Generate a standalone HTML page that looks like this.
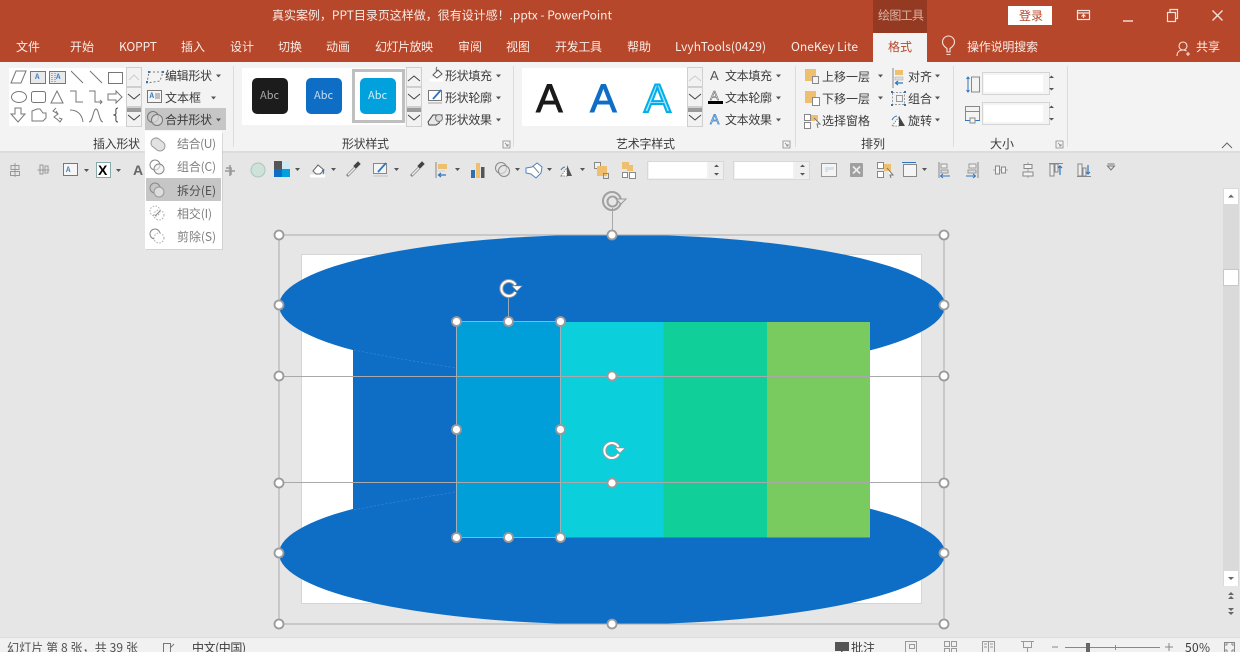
<!DOCTYPE html>
<html lang="zh"><head><meta charset="utf-8"><title>PowerPoint</title>
<style>
html,body{margin:0;padding:0;background:#e6e6e6;width:1240px;height:652px;overflow:hidden}
svg{display:block;font-family:"Liberation Sans","Noto Sans CJK SC",sans-serif;filter:blur(.35px)}
text{font-family:"Noto Sans CJK SC","Liberation Sans",sans-serif;font-size:12px;fill:#3c3c3c}
.t text{fill:#f8ece7;font-size:12px}
.m text{fill:#808080;font-size:12px}
.i{fill:none;stroke:#777;stroke-width:1}
.dd{fill:#555;stroke:none}
.h{fill:#fff;stroke:#9a9a9a;stroke-width:1.800}
.sb{fill:none;stroke:#444;stroke-width:1}
</style></head><body>
<svg width="1240" height="652" viewBox="0 0 1240 652" xmlns="http://www.w3.org/2000/svg">
<!-- backgrounds -->
<rect width="1240" height="652" fill="#e6e6e6"/>
<rect width="1240" height="62" fill="#b7472a"/>
<rect y="62" width="1240" height="90" fill="#f3f3f3"/>
<rect y="151" width="1240" height="2" fill="#dcdcdc"/>
<rect x="873" width="54" height="33" fill="#953a22"/>
<rect x="873" y="33" width="54" height="29" fill="#f3f3f3"/>

<!-- title bar -->
<g class="t">
<text x="272" y="19.500" textLength="340">真实案例，PPT目录页这样做，很有设计感！.pptx  -  PowerPoint</text>
<text x="878" y="19.500" textLength="46" style="fill:#d9b3a6">绘图工具</text>
</g>
<rect x="1008" y="6" width="44" height="19" fill="#fff"/>
<text x="1019" y="20" style="fill:#b7472a" textLength="24">登录</text>
<g fill="none" stroke="#f4e4de" stroke-width="1.200">
<rect x="1077.500" y="10.500" width="12" height="9"/><path d="M1077 13h13M1083.500 18v-3M1081.500 16.500l2-2 2 2"/>
<path d="M1123 21h10" stroke-width="1.400"/>
<rect x="1167.500" y="12.500" width="8" height="9"/><path d="M1170 12v-2.500h7.500v9h-2"/>
<path d="M1212.500 10.500l10 10M1222.500 10.500l-10 10" stroke-width="1.300"/>
</g>

<!-- tabs -->
<g class="t">
<text x="16" y="51" textLength="24">文件</text>
<text x="70" y="51" textLength="24">开始</text>
<text x="119" y="51" textLength="38">KOPPT</text>
<text x="181" y="51" textLength="24">插入</text>
<text x="230" y="51" textLength="24">设计</text>
<text x="278" y="51" textLength="24">切换</text>
<text x="326" y="51" textLength="24">动画</text>
<text x="375" y="51" textLength="58">幻灯片放映</text>
<text x="458" y="51" textLength="24">审阅</text>
<text x="506" y="51" textLength="24">视图</text>
<text x="555" y="51" textLength="47">开发工具</text>
<text x="627" y="51" textLength="24">帮助</text>
<text x="675" y="51" textLength="91">LvyhTools(0429)</text>
<text x="791" y="51" textLength="67">OneKey Lite</text>
<text x="967" y="51" textLength="71">操作说明搜索</text>
<text x="1196" y="51" textLength="24">共享</text>
</g>
<text x="888" y="51" style="fill:#b7472a" textLength="24">格式</text>
<g fill="none" stroke="#f4e4de" stroke-width="1.100">
<path d="M947 52v-3.500c-3-2-4.500-4-4.500-6.500a6 6 0 0 1 12 0c0 2.500-1.500 4.500-4.500 6.500V52zM946.500 54.500h4"/>
<circle cx="1183" cy="46" r="4"/><path d="M1177 56c0-4 2.500-6 6-6 1.500 0 2.500.3 3.500 1M1186 54h4M1188 52v4"/>
</g>

<!-- insert shapes gallery -->
<rect x="9" y="68" width="117" height="58" fill="#fff"/>
<g fill="#f2f2f2" stroke="#cfcfcf"><rect x="126.500" y="67.500" width="15" height="19"/><rect x="126.500" y="87.500" width="15" height="19"/><rect x="126.500" y="107.500" width="15" height="19"/></g>
<path d="M129 80l5-5 5 5" fill="none" stroke="#ccc"/>
<path class="sb" d="M128 94l6 5 6-5M128 115l6 5 6-5M127 109h14M127 111h14"/>
<g class="i">
<path d="M11 83l5-12h10l-5 12z"/>
<rect x="30.500" y="71.500" width="15" height="12" fill="#e9e9e9"/><rect x="49.500" y="71.500" width="16" height="12" fill="#e9e9e9"/><path d="M52 73v9M55 73v9" stroke-dasharray="1 1"/>
<path d="M71 71l12 12M90 71l12 12"/><rect x="108.500" y="72.500" width="14" height="11"/>
<ellipse cx="19" cy="97" rx="7.500" ry="5.500"/><rect x="31.500" y="91.500" width="14" height="11" rx="2"/><path d="M57 91l6 12H51z"/>
<path d="M70 91h6v11h7M89 91h6v11h7M100 100l2 2-2 2"/><path d="M108 94h8v-3l6 6-6 6v-3h-8z"/>
<path d="M15 108h6v6h4l-7 8-7-8h4z"/><path d="M32 111l5-2h3l3 4h3v5l-3 3H32z"/>
<path d="M56 108l-3 3 5 3-4 3 4 3 2 2 2-3-3-1M58 114l-2-3"/><path d="M70 110c7 0 12 4 13 12"/><path d="M89 122c4 0 4-13 7-13s3 13 7 13"/>
<path d="M118 108c-3 0-2 3-2 5s-1 1.500-2 2c1 .5 2 0 2 2s-1 5 2 5" stroke="#444"/>
</g>
<text x="35" y="79" style="font-size:7px;fill:#3f7fc4;font-weight:700">A</text><text x="56" y="79" style="font-size:7px;fill:#3f7fc4;font-weight:700">A</text>

<!-- edit shape column -->
<path d="M149 72h14l-3 9-13 2z" fill="none" stroke="#777" stroke-dasharray="2 2"/><g fill="#2f75bd"><rect x="148" y="71" width="2" height="2"/><rect x="162" y="71" width="2" height="2"/><rect x="146" y="81" width="2" height="2"/></g>
<text x="165" y="80" textLength="47">编辑形状</text><path class="dd" d="M216 74.500h5l-2.500 3z"/>
<rect x="147.500" y="90.500" width="14" height="12" fill="#f5f5f5" stroke="#777"/><path d="M155 94h5M155 96h5M155 98h5" stroke="#888"/><text x="149.500" y="98" style="font-size:7px;fill:#2f75bd;font-weight:700">A</text>
<text x="165" y="102" textLength="36">文本框</text><path class="dd" d="M211 96.500h5l-2.500 3z"/>
<rect x="145" y="108" width="81" height="22" fill="#c6c6c6"/>
<circle cx="153" cy="117" r="5.500" fill="none" stroke="#777"/><circle cx="157" cy="120" r="5.500" fill="#ddd" fill-opacity=".7" stroke="#777"/>
<text x="165" y="124" textLength="47">合并形状</text><path class="dd" d="M216 118.500h5l-2.500 3z"/>

<!-- shape style gallery -->
<rect x="242" y="68" width="163" height="57" fill="#fff"/>
<rect x="353.500" y="70.500" width="50" height="51" fill="#fff" stroke="#bfbfbf" stroke-width="3"/>
<rect x="252" y="78" width="36" height="36" rx="5" fill="#1c1c1c"/><rect x="306" y="78" width="36" height="36" rx="5" fill="#0e6ec5"/><rect x="360" y="78" width="36" height="36" rx="5" fill="#00a1dc"/>
<text x="260" y="99" style="font-size:11px;fill:#a8a8a8">Abc</text><text x="314" y="99" style="font-size:11px;fill:#c7dcf2">Abc</text><text x="368" y="99" style="font-size:11px;fill:#d2f0fa">Abc</text>
<g fill="#f2f2f2" stroke="#cfcfcf"><rect x="406.500" y="67.500" width="15" height="19"/><rect x="406.500" y="87.500" width="15" height="19"/><rect x="406.500" y="107.500" width="15" height="19"/></g>
<path class="sb" d="M408 81l6-5 6 5M408 94l6 5 6-5M408 115l6 5 6-5M407 109h14M407 111h14"/>
<path d="M430 80h13" stroke="#fff" stroke-width="3"/><path d="M433 75l5-5 4 4-5 4z" fill="#fff" stroke="#555"/><path d="M437 67c-1 1-1 3 0 5" fill="none" stroke="#666"/>
<text x="445" y="80" textLength="47">形状填充</text><path class="dd" d="M496 74.500h5l-2.500 3z"/>
<rect x="428.500" y="90.500" width="13" height="10" fill="#fff" stroke="#777"/><path d="M433 99l8-9" stroke="#2f75bd" stroke-width="1.800"/><path d="M428 103h14" stroke="#ccc" stroke-width="2"/>
<text x="445" y="102" textLength="47">形状轮廓</text><path class="dd" d="M496 96.500h5l-2.500 3z"/>
<path d="M428 122l5-7h9l-3 8-3 2h-7z" fill="#e7e7e7" stroke="#444"/><circle cx="439" cy="118" r="3.500" fill="#ddd" stroke="#777"/>
<text x="445" y="124" textLength="47">形状效果</text><path class="dd" d="M496 118.500h5l-2.500 3z"/>

<!-- WordArt -->
<rect x="522" y="68" width="165" height="58" fill="#fff"/>
<text x="536" y="112" style="font-size:40px;fill:#1a1a1a;stroke:#1a1a1a;stroke-width:.9px;font-family:'Liberation Sans',sans-serif">A</text>
<text x="590" y="112" style="font-size:40px;fill:#0e6ec5;stroke:#0e6ec5;stroke-width:.9px;font-family:'Liberation Sans',sans-serif">A</text>
<text x="644" y="112" style="font-size:40px;fill:#a7e4fa;stroke:#00aeea;stroke-width:2px;font-family:'Liberation Sans',sans-serif">A</text>
<g fill="#f2f2f2" stroke="#cfcfcf"><rect x="687.500" y="67.500" width="15" height="19"/><rect x="687.500" y="87.500" width="15" height="19"/><rect x="687.500" y="107.500" width="15" height="19"/></g>
<path d="M689 81l6-5 6 5" fill="none" stroke="#ccc"/><path class="sb" d="M689 94l6 5 6-5M689 115l6 5 6-5M688 109h14M688 111h14"/>
<text x="710" y="80" style="font-size:13px;fill:#555;font-family:'Liberation Sans',sans-serif">A</text>
<text x="725" y="80" textLength="47">文本填充</text><path class="dd" d="M776 74.500h5l-2.500 3z"/>
<text x="710" y="100" style="font-size:13px;fill:#fff;stroke:#666;stroke-width:.6px;font-family:'Liberation Sans',sans-serif">A</text><rect x="708" y="101" width="15" height="3" fill="#000"/>
<text x="725" y="102" textLength="47">文本轮廓</text><path class="dd" d="M776 96.500h5l-2.500 3z"/>
<text x="710" y="124" style="font-size:14px;fill:#dbe9f7;stroke:#3d83c8;stroke-width:.7px;font-family:'Liberation Sans',sans-serif">A</text>
<text x="725" y="124" textLength="47">文本效果</text><path class="dd" d="M776 118.500h5l-2.500 3z"/>

<!-- arrange -->
<rect x="805" y="69" width="11" height="12" fill="#eebf6f"/><rect x="812.500" y="76.500" width="6" height="7" fill="#f3f3f3" stroke="#888"/>
<text x="822" y="81" textLength="48">上移一层</text><path class="dd" d="M878 74.500h5l-2.500 3z"/>
<rect x="805" y="91" width="11" height="12" fill="#eebf6f"/><rect x="812.500" y="97.500" width="7" height="8" fill="#fff" stroke="#888"/>
<text x="822" y="103" textLength="48">下移一层</text><path class="dd" d="M878 96.500h5l-2.500 3z"/>
<rect x="804.500" y="114.500" width="6" height="6" fill="#fff" stroke="#888"/><rect x="804.500" y="122.500" width="6" height="6" fill="#fff" stroke="#888"/><rect x="811" y="115" width="7" height="6" fill="#eebf6f"/><path d="M814 118l6 6-3 0 1 4" fill="#fff" stroke="#777"/>
<text x="822" y="125" textLength="48">选择窗格</text>
<path d="M893 68v20" stroke="#888"/><rect x="895" y="70" width="8" height="5" fill="#eebf6f"/><rect x="895" y="77" width="8" height="3" fill="#ddd" stroke="#aaa" stroke-width=".5"/><path d="M903 83h-7M898 81l-2.500 2 2.500 2" fill="none" stroke="#2f75bd" stroke-width="1.200"/>
<text x="908" y="81" textLength="24">对齐</text><path class="dd" d="M935 74.500h5l-2.500 3z"/>
<rect x="892.500" y="92.500" width="12" height="12" fill="none" stroke="#999" stroke-dasharray="2 1.500"/><rect x="896.500" y="95.500" width="6" height="6" fill="none" stroke="#999"/><g fill="#2f75bd"><rect x="891" y="91" width="2" height="2"/><rect x="904" y="91" width="2" height="2"/><rect x="891" y="104" width="2" height="2"/><rect x="904" y="104" width="2" height="2"/></g>
<text x="908" y="103" textLength="24">组合</text><path class="dd" d="M935 96.500h5l-2.500 3z"/>
<path d="M892 126l7-9v9z" fill="#fff" stroke="#888" stroke-dasharray="1.500 1"/><path d="M899 116l6 10h-6z" fill="#444"/><path d="M892 120c1-2 3-4 5-4" fill="none" stroke="#2f75bd"/>
<text x="908" y="125" textLength="24">旋转</text><path class="dd" d="M935 118.500h5l-2.500 3z"/>

<!-- size -->
<rect x="982.500" y="72.500" width="67" height="22" fill="#f4f4f4" stroke="#d4d4d4"/><rect x="982.500" y="102.500" width="67" height="22" fill="#f4f4f4" stroke="#d4d4d4"/>
<rect x="971.500" y="77" width="8" height="15" fill="none" stroke="#888"/>
<rect x="984" y="75" width="59" height="17" fill="#fff"/><rect x="984" y="105" width="59" height="17" fill="#fff"/>
<g fill="none" stroke="#2f75bd"><path d="M968 77v15"/><path d="M966.500 79l1.500-2 1.500 2M966.500 90l1.500 2 1.500-2"/></g>
<g fill="none" stroke="#888"><rect x="965.500" y="106.500" width="14" height="14"/><path d="M965 111.500h15"/></g><path d="M965 120.500h15" stroke="#2f75bd"/><rect x="970" y="118" width="5" height="5" fill="#f3f3f3" stroke="#888"/>
<path class="dd" d="M1049 78l2.500-2.500 2.500 2.500zM1049 88l2.500 2.500 2.500-2.500zM1049 108l2.500-2.500 2.500 2.500zM1049 118l2.500 2.500 2.500-2.500z"/>

<!-- ribbon separators and group labels -->
<g stroke="#dcdcdc"><path d="M233.500 66v81M513.500 66v81M795.500 66v81M953.500 66v81M1067.500 66v81"/></g>
<text x="93" y="148" textLength="47">插入形状</text>
<text x="342" y="148" textLength="47">形状样式</text>
<text x="616" y="148" textLength="59">艺术字样式</text>
<text x="861" y="148" textLength="24">排列</text>
<text x="990" y="148" textLength="24">大小</text>
<g fill="none" stroke="#888" stroke-width=".8"><path d="M503 141h7v7h-7zM505 143l3 3M508 144v2h-2"/><path d="M783 141h7v7h-7zM785 143l3 3M788 144v2h-2"/><path d="M1056 141h7v7h-7zM1058 143l3 3M1061 144v2h-2"/></g>
<path d="M1222 148l5-5 5 5" fill="none" stroke="#666"/>

<!-- toolbar icons -->
<path d="M15 163v14M11 165.500h8v4h-8zM10.500 171.500h9v4h-9z" fill="none" stroke="#999"/>
<path d="M37.500 170h12M40 165h3v9h-3zM45 166h3v7h-3z" fill="none" stroke="#999"/>
<rect x="63.500" y="163.500" width="14" height="12" fill="#f6f6f6" stroke="#777"/>
<text x="66" y="172" style="font-size:7px;fill:#3f7fc4;font-weight:700">A</text>
<path class="dd" d="M84 169h5l-2.500 3z"/>
<rect x="96.500" y="162.500" width="14" height="15" fill="#fff" stroke="#8aa"/><text x="98" y="175" style="font-size:14px;fill:#000;font-weight:700;font-family:'Liberation Sans',sans-serif">X</text>
<path class="dd" d="M116 169h5l-2.500 3z"/>
<text x="133" y="175" style="font-size:14px;fill:#666;font-weight:700;font-family:'Liberation Sans',sans-serif">A</text>
<path d="M225 171h10M230 165v11" fill="none" stroke="#999" stroke-width="1.500"/><path d="M226 168h5v7" fill="none" stroke="#999" stroke-width="1.500"/>
<circle cx="258" cy="170" r="7" fill="#cfe2da" stroke="#aac4b8"/>
<rect x="274" y="161" width="8" height="8" fill="#555"/><rect x="282" y="161" width="8" height="8" fill="#cfe8f5"/><rect x="274" y="169" width="8" height="8" fill="#0e6ec5"/><rect x="282" y="169" width="8" height="8" fill="#00a1dc"/>
<path class="dd" d="M295 168h5l-2.500 3z"/>
<path d="M313 171l5-6 6 5-4 4h-4z" fill="#fff" stroke="#666"/><path d="M322 170c2 1 2 3 1 4" fill="none" stroke="#2f75bd"/><path d="M310 176h15" stroke="#fff" stroke-width="3"/><path class="dd" d="M331 168h5l-2.500 3z"/>
<path d="M347 176l8-8" stroke="#888" stroke-width="3"/><path d="M348 175l7-7" stroke="#eee" stroke-width="1.400"/><path d="M354 166l2 2 4-4-2-2z" fill="#444" stroke="#444"/>
<rect x="373.500" y="163.500" width="13" height="10" fill="#f4f4f4" stroke="#888"/><path d="M378 172l8-9" stroke="#2f75bd" stroke-width="1.800"/><path d="M373 176h15" stroke="#d5d5d5" stroke-width="2"/><path class="dd" d="M394 168h5l-2.500 3z"/>
<path d="M411 176l8-8" stroke="#888" stroke-width="3"/><path d="M412 175l7-7" stroke="#eee" stroke-width="1.400"/><path d="M418 166l2 2 4-4-2-2z" fill="#444" stroke="#444"/>
<path d="M436 162v16" stroke="#888"/><rect x="438" y="164" width="9" height="5" fill="#eebf6f"/><rect x="438" y="170" width="7" height="2" fill="#ddd"/><path d="M446 175h-7M441 173l-2.500 2 2.500 2" fill="none" stroke="#2f75bd" stroke-width="1.200"/><path class="dd" d="M455 168h5l-2.500 3z"/>
<rect x="471" y="170" width="4" height="8" fill="#2f6fae"/><rect x="476" y="163" width="4" height="15" fill="#eebf6f"/><rect x="481" y="167" width="3.500" height="11" fill="#555"/>
<circle cx="501" cy="168" r="5.500" fill="none" stroke="#888"/><circle cx="504" cy="171" r="5.500" fill="#e6e6e6" fill-opacity=".6" stroke="#888"/><path class="dd" d="M515 168h5l-2.500 3z"/>
<path d="M526 168l6 -1 5-4 5 4-1 6-5 5-5-4-5-1z" fill="#fff" stroke="#4a86c5"/><path d="M533 166l6 7" stroke="#888"/><path class="dd" d="M547 168h5l-2.500 3z"/>
<path d="M561 176l6-8v8z" fill="#fff" stroke="#888" stroke-dasharray="1.500 1"/><path d="M567 165l5 11h-5z" fill="#555"/><path d="M561 170c1-2 3-3 4-3" fill="none" stroke="#2f75bd"/><path class="dd" d="M580 168h5l-2.500 3z"/>
<rect x="594.500" y="162.500" width="6" height="6" fill="#f3f3f3" stroke="#888"/><rect x="597" y="166" width="10" height="10" fill="#eebf6f"/><rect x="603.500" y="173.500" width="5" height="5" fill="none" stroke="#888"/>
<rect x="622" y="162" width="7" height="7" fill="#eebf6f"/><rect x="627" y="165" width="6" height="6" fill="#eebf6f"/><rect x="622.500" y="172.500" width="5" height="5" fill="#fff" stroke="#888"/><rect x="629.500" y="172.500" width="6" height="6" fill="#fff" stroke="#888"/>

<!-- inputs -->
<rect x="648" y="161" width="76" height="18" fill="#f2f2f2" stroke="#d8d8d8" transform="translate(-.5 .5)"/>
<rect x="649" y="162" width="58" height="16" fill="#fff"/><rect x="709" y="162" width="14" height="16" fill="#efefef"/>
<rect x="734" y="161" width="76" height="18" fill="#f2f2f2" stroke="#d8d8d8" transform="translate(-.5 .5)"/>
<rect x="735" y="162" width="58" height="16" fill="#fff"/><rect x="795" y="162" width="14" height="16" fill="#efefef"/>
<path class="dd" d="M714 167l2.500-2.500 2.500 2.500zM714 173l2.500 2.500 2.500-2.500zM800 167l2.500-2.500 2.500 2.500zM800 173l2.500 2.500 2.500-2.500z"/>

<rect x="821.500" y="163.500" width="15" height="13" fill="#f4f4f4" stroke="#999"/><path d="M825 167h9v3h-6v2h-3z" fill="#cfe3f4"/>
<rect x="850" y="163" width="13" height="14" rx="1" fill="#a0a0a0"/><path d="M853 166.500l7 7M860 166.500l-7 7" stroke="#eee" stroke-width="1.600"/>
<rect x="877.500" y="162.500" width="6" height="6" fill="#fff" stroke="#888"/><rect x="877.500" y="171.500" width="6" height="6" fill="#fff" stroke="#888"/><rect x="884" y="164" width="7" height="7" fill="#eebf6f"/><path d="M887 168l6 7-3 0 1 3" fill="#fff" stroke="#777"/>
<path d="M902 162.500h14" stroke="#2f75bd"/><rect x="903.500" y="164.500" width="13" height="12" fill="#f5f5f5" stroke="#888"/><path class="dd" d="M922 168h5l-2.500 3z"/>
<path d="M939 162v16" stroke="#888"/><rect x="941" y="164" width="6" height="4" fill="#eee" stroke="#999"/><rect x="941" y="170" width="7" height="3" fill="#ddd" stroke="#999"/><path d="M950 176h-9M943 174l-2.500 2 2.500 2" fill="none" stroke="#2f75bd"/>
<path d="M978 162v16" stroke="#888"/><rect x="969" y="164" width="7" height="4" fill="#eee" stroke="#999"/><rect x="968" y="170" width="8" height="3" fill="#ddd" stroke="#999"/><path d="M966 176h9M973 174l2.500 2-2.500 2" fill="none" stroke="#2f75bd"/>
<path d="M993 170h15" stroke="#aaa"/><rect x="995.500" y="166" width="4" height="8" fill="#f2f2f2" stroke="#888"/><rect x="1001.500" y="167" width="4" height="6" fill="#f2f2f2" stroke="#888"/>
<path d="M1028 162v16" stroke="#aaa"/><rect x="1024" y="164.500" width="8" height="4" fill="#f2f2f2" stroke="#888"/><rect x="1023" y="172" width="10" height="4" fill="#f2f2f2" stroke="#888"/>
<path d="M1049 163.500h14" stroke="#888"/><rect x="1050" y="164" width="4" height="12" fill="#eee" stroke="#888"/><rect x="1055" y="164" width="3" height="8" fill="#eee" stroke="#888"/><path d="M1060 175v-9M1058 168l2-2 2 2" fill="none" stroke="#2f75bd" stroke-width="1.200"/>
<path d="M1077 176.500h14" stroke="#888"/><rect x="1078" y="164" width="4" height="12" fill="#eee" stroke="#888"/><rect x="1083" y="168" width="3" height="8" fill="#eee" stroke="#888"/><path d="M1088 165v9M1086 172l2 2 2-2" fill="none" stroke="#2f75bd" stroke-width="1.200"/>
<path d="M1107.500 166h7l-3.500 4z M1107.500 164h7" fill="none" stroke="#777"/>

<!-- slide -->
<rect x="301.500" y="254.500" width="620" height="349" fill="#fff" stroke="#d5d5d5"/>
<rect x="353" y="340" width="200" height="180" fill="#0e6ec5"/>
<ellipse cx="612" cy="305.500" rx="333" ry="71" fill="#0e6ec5"/>
<ellipse cx="612" cy="553.500" rx="333" ry="71" fill="#0e6ec5"/>
<path d="M354 350c40 8 70 13 102 18" fill="none" stroke="#3d88d2" stroke-dasharray="2 2" stroke-width=".7"/>
<path d="M354 510c40-8 70-13 102-18" fill="none" stroke="#3d88d2" stroke-dasharray="2 2" stroke-width=".7"/>
<rect x="456" y="322" width="104.500" height="215.500" fill="#009fd9"/>
<rect x="560.500" y="322" width="103" height="215.500" fill="#0bd0dc"/>
<rect x="663.500" y="322" width="103.500" height="215.500" fill="#10cf98"/>
<rect x="767" y="322" width="103" height="215.500" fill="#79cb5f"/>

<!-- selection -->
<g fill="none" stroke="#a9a9a9" stroke-width="1">
<rect x="279" y="235" width="665" height="389"/>
<path d="M279 376.500h665M279 482.500h665M612.500 208v27"/>
<path d="M508.500 298v23" stroke="#9ab"/>
</g>
<rect x="456.500" y="321.500" width="104" height="216" fill="none" stroke="#9fb0b8" stroke-width="1"/>
<g class="h">
<circle cx="279" cy="235" r="4.500"/><circle cx="612" cy="235" r="4.500"/><circle cx="944" cy="235" r="4.500"/>
<circle cx="279" cy="305" r="4.500"/><circle cx="944" cy="305" r="4.500"/>
<circle cx="279" cy="376" r="4.500"/><circle cx="612" cy="376" r="4.500"/><circle cx="944" cy="376" r="4.500"/>
<circle cx="279" cy="483" r="4.500"/><circle cx="612" cy="483" r="4.500"/><circle cx="944" cy="483" r="4.500"/>
<circle cx="279" cy="553" r="4.500"/><circle cx="944" cy="553" r="4.500"/>
<circle cx="279" cy="624" r="4.500"/><circle cx="612" cy="624" r="4.500"/><circle cx="944" cy="624" r="4.500"/>
<circle cx="456.500" cy="321.500" r="4.500"/><circle cx="508.500" cy="321.500" r="4.500"/><circle cx="560.500" cy="321.500" r="4.500"/>
<circle cx="456.500" cy="429.500" r="4.500"/><circle cx="560.500" cy="429.500" r="4.500"/>
<circle cx="456.500" cy="537.500" r="4.500"/><circle cx="508.500" cy="537.500" r="4.500"/><circle cx="560.500" cy="537.500" r="4.500"/>
</g>
<!-- rotate handles -->
<g fill="none">
<circle cx="612" cy="201" r="9" stroke="#a0a0a0" stroke-width="2"/><circle cx="612.500" cy="201.500" r="5" stroke="#a0a0a0" stroke-width="2"/>
<g stroke="#9a9a9a" stroke-width="4"><path d="M515.500 292a7.500 7.500 0 1 1 0-7"/><path d="M618.500 454a7.500 7.500 0 1 1 0-7"/></g>
<g stroke="#fff" stroke-width="2"><path d="M515.500 292a7.500 7.500 0 1 1 0-7"/><path d="M618.500 454a7.500 7.500 0 1 1 0-7"/></g>
</g>
<path d="M616 199h10l-5 5z" fill="#e6e6e6" stroke="#9a9a9a"/><path d="M512 286h10l-5 5z" fill="#fff" stroke="#9a9a9a" stroke-width=".6"/><path d="M615 448h10l-5 5z" fill="#fff" stroke="#9a9a9a" stroke-width=".6"/>

<!-- merge menu -->
<rect x="146" y="133" width="77" height="117" fill="#bbb" opacity=".45"/>
<rect x="145" y="131" width="77" height="118" fill="#fff"/>
<rect x="146" y="178" width="75" height="23" fill="#c6c6c6"/>
<g class="m">
<text x="177" y="148" textLength="39">结合(U)</text>
<text x="177" y="171" textLength="39">组合(C)</text>
<text x="177" y="195" textLength="39" style="fill:#505050">拆分(E)</text>
<text x="177" y="218" textLength="35">相交(I)</text>
<text x="177" y="241" textLength="39">剪除(S)</text>
</g>
<path d="M151 143a5 5 0 0 1 8-4l5 4a5 5 0 0 1-7 7l-5-4a5 5 0 0 1-1-3z" fill="#e2e2e2" stroke="#999"/>
<circle cx="155" cy="165" r="5" fill="none" stroke="#888"/><circle cx="159" cy="169" r="5" fill="#eee" fill-opacity=".6" stroke="#888"/>
<circle cx="155" cy="188" r="5" fill="none" stroke="#888"/><circle cx="159" cy="192" r="5" fill="#ddd" stroke="#999"/>
<circle cx="155" cy="211" r="5" fill="none" stroke="#aaa" stroke-dasharray="1.500 1.500"/><circle cx="159" cy="215" r="5" fill="none" stroke="#aaa" stroke-dasharray="1.500 1.500"/><path d="M155 216l5-5" stroke="#888"/>
<circle cx="155" cy="234" r="5" fill="#fff" stroke="#888"/><circle cx="159" cy="238" r="5" fill="#fff" stroke="#aaa" stroke-dasharray="1.500 1.500"/>

<!-- scrollbar -->
<rect x="1223" y="188" width="16" height="398" fill="#dadada"/>
<rect x="1224" y="189" width="14" height="15" fill="#fff"/>
<rect x="1223.500" y="269.500" width="15" height="16" fill="#fff" stroke="#c8c8c8"/>
<rect x="1224" y="571" width="14" height="15" fill="#fff"/>
<path fill="#666" d="M1228 197.500l3-3 3 3zM1228 577l3 3 3-3zM1228 595l3-3 3 3zM1228 599l3-3 3 3zM1228 608l3 3 3-3zM1228 612l3 3 3-3z"/>

<!-- status bar -->
<rect y="638" width="1240" height="14" fill="#f1f1f1"/>
<rect y="637" width="1240" height="1" fill="#dcdcdc"/>
<text x="7" y="652" style="fill:#505050" textLength="131">幻灯片 第 8 张，共 39 张</text>
<path d="M163.500 643.500h7v9h-7zM170 648l4-4" fill="none" stroke="#777"/>
<text x="192" y="652" textLength="54">中文(中国)</text>
<path d="M835 642h14v9h-6l-2 2v-2h-6z" fill="#555"/>
<text x="851" y="652" textLength="24">批注</text>
<g fill="none" stroke="#999"><rect x="905.500" y="641.500" width="11" height="11"/><rect x="909.500" y="644.500" width="5" height="4"/><rect x="944.500" y="641.500" width="5" height="5"/><rect x="951.500" y="641.500" width="5" height="5"/><rect x="944.500" y="648.500" width="5" height="5"/><rect x="951.500" y="648.500" width="5" height="5"/><rect x="982.500" y="641.500" width="12" height="12"/><path d="M988.500 641v12M984 644h3M984 647h3M990 644h3M990 647h3"/><path d="M1021 641.500h13M1023.500 641.500v6h8v-6M1027.500 648v5"/></g>
<path d="M1052 647h6M1065 647.500h95M1165 647h8M1169 643v8M1115.500 645v5" stroke="#888" fill="none"/>
<rect x="1086" y="643" width="4" height="9" fill="#666"/>
<text x="1185" y="652" textLength="25">50%</text>
<g fill="none" stroke="#888"><rect x="1224.500" y="642.500" width="10" height="10"/><path d="M1226 646v-2h2M1233 646v-2h-2M1226 649v2h2M1233 649v2h-2"/></g>
</svg>
</body></html>
